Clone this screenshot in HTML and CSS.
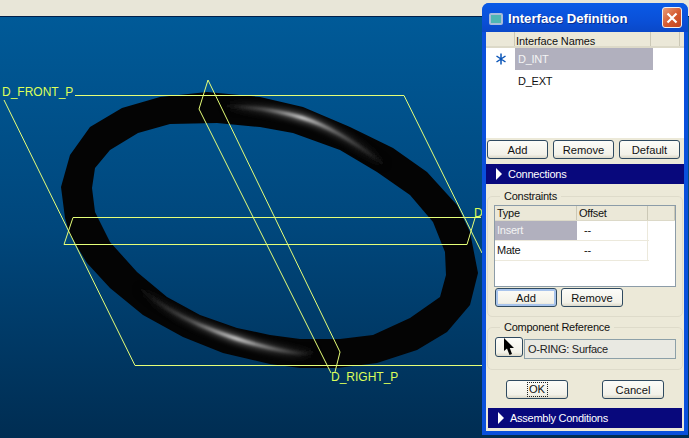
FILE: index.html
```html
<!DOCTYPE html>
<html lang="en">
<head>
<meta charset="utf-8">
<title>Interface Definition</title>
<link rel="stylesheet" href="styles.css">
</head>
<body>
<div class="app">
  <div class="topbar"></div>
  <div class="viewport">
    <svg class="scene" width="689" height="421" viewBox="0 17 689 421">
      <defs>
        <linearGradient id="bg" x1="0" y1="0" x2="0" y2="1">
          <stop offset="0" stop-color="#005a98"/>
          <stop offset="0.5" stop-color="#00477c"/>
          <stop offset="1" stop-color="#002d52"/>
        </linearGradient>
        <linearGradient id="glowTop" gradientUnits="userSpaceOnUse" x1="225" y1="0" x2="385" y2="0">
          <stop offset="0" stop-color="#050505"/>
          <stop offset="0.25" stop-color="#606060"/>
          <stop offset="0.48" stop-color="#f0f0f0"/>
          <stop offset="0.7" stop-color="#707070"/>
          <stop offset="1" stop-color="#050505"/>
        </linearGradient>
        <linearGradient id="glowBottom" gradientUnits="userSpaceOnUse" x1="140" y1="0" x2="315" y2="0">
          <stop offset="0" stop-color="#050505"/>
          <stop offset="0.3" stop-color="#606060"/>
          <stop offset="0.55" stop-color="#e8e8e8"/>
          <stop offset="0.78" stop-color="#707070"/>
          <stop offset="1" stop-color="#050505"/>
        </linearGradient>
        <filter id="soft" x="-30%" y="-100%" width="160%" height="300%"><feGaussianBlur stdDeviation="1.5"/></filter>
        <filter id="wide" x="-30%" y="-100%" width="160%" height="300%"><feGaussianBlur stdDeviation="3.5"/></filter>
      </defs>
      <rect x="0" y="17" width="689" height="421" fill="url(#bg)"/>
      <path class="ring" fill-rule="evenodd" d="M61 187 L70 155 L90 127 L122 108 L160 97 L207 92 L260 97 L303 107 L350 127 L393 148 L427 172 L457 205 L470 232 L478 273 L470 305 L447 332 L417 350 L377 363 L337 368 L300 368 L270 364 L223 353 L183 337 L143 315 L110 288 L87 263 L70 235 L65 218 Z M92 188 L95 168 L110 150 L138 133 L170 124 L217 123 L260 127 L293 133 L340 150 L377 172 L410 195 L433 222 L445 252 L446 275 L440 297 L410 318 L373 335 L340 339 L300 339 L270 335 L237 328 L200 315 L167 297 L137 272 L110 242 L95 212 Z"/>
      <path class="glow glow-top halo" filter="url(#wide)" d="M228 106 Q270 108 303 118 T382 163"/>
      <path class="glow glow-bottom halo" filter="url(#wide)" d="M142 290 Q165 310 200 325 T270 348 T312 352"/>
      <path class="glow glow-top" filter="url(#soft)" d="M228 106 Q270 108 303 118 T382 163"/>
      <path class="glow glow-bottom" filter="url(#soft)" d="M142 290 Q165 310 200 325 T270 348 T312 352"/>
      <g class="planes">
        <polyline points="75,95.5 404,95.5 482,253"/>
        <polyline points="4,100 135,365.5 482,365.5"/>
        <polyline points="331,373 199,109 208,80 340,352 335,372"/>
        <polyline points="481,217.5 73,217.5 64,244.5 467,244.5 475,218"/>
      </g>
      <text class="label" x="2" y="96">D_FRONT_P</text>
      <text class="label" x="331" y="381">D_RIGHT_P</text>
      <text class="label" x="474" y="217">D</text>
    </svg>
  </div>

  <section class="dialog">
    <header class="titlebar">
      <span class="appicon"></span>
      <h1 class="title">Interface Definition</h1>
      <button class="close" type="button" aria-label="Close">
        <svg width="12" height="12" viewBox="0 0 12 12"><path d="M1.5 1.5 L10.5 10.5 M10.5 1.5 L1.5 10.5"/></svg>
      </button>
    </header>
    <div class="body">
      <div class="listhead">
        <span class="lh-gutter"></span>
        <span class="lh-name">Interface Names</span>
        <span class="lh-end"></span>
      </div>
      <div class="list">
        <div class="list-row">
          <span class="marker">
            <svg width="12" height="12" viewBox="0 0 12 12"><path d="M6 0.5 V11.5 M1.5 3 L10.5 9 M10.5 3 L1.5 9"/></svg>
          </span>
          <span class="item selected">D_INT</span>
        </div>
        <div class="list-row">
          <span class="marker"></span>
          <span class="item">D_EXT</span>
        </div>
      </div>
      <div class="btnrow">
        <button class="btn wide" type="button">Add</button>
        <button class="btn wide" type="button">Remove</button>
        <button class="btn wide" type="button">Default</button>
      </div>
      <div class="bar"><span class="tri"></span>Connections</div>

      <fieldset class="group constraints">
        <legend>Constraints</legend>
        <div class="table">
          <div class="thead">
            <span class="c1">Type</span><span class="c2">Offset</span><span class="c3"></span>
          </div>
          <div class="trow">
            <span class="c1 selected">Insert</span><span class="c2">--</span>
          </div>
          <div class="trow">
            <span class="c1">Mate</span><span class="c2">--</span>
          </div>
        </div>
        <div class="tblbtns">
          <button class="btn mid default" type="button">Add</button>
          <button class="btn mid" type="button">Remove</button>
        </div>
      </fieldset>

      <fieldset class="group reference">
        <legend>Component Reference</legend>
        <div class="refrow">
          <button class="btn pick" type="button" aria-label="Select">
            <svg width="12" height="18" viewBox="0 0 12 18"><path d="M1 0 L1 13 L4 10.5 L6.5 17 L9 16 L6.8 10 L11 10 Z"/></svg>
          </button>
          <div class="field">O-RING: Surface</div>
        </div>
      </fieldset>

      <div class="okrow">
        <button class="btn mid ok" type="button"><span class="focus">OK</span></button>
        <button class="btn mid" type="button">Cancel</button>
      </div>
      <div class="bar bar-bottom"><span class="tri"></span>Assembly Conditions</div>
    </div>
  </section>
</div>
</body>
</html>
```
FILE: styles.css
```css
* { box-sizing: border-box; }
html, body { margin: 0; padding: 0; }
body { width: 689px; height: 438px; overflow: hidden; font-family: "Liberation Sans", Arial, sans-serif; font-size: 11px; letter-spacing: -0.25px; color: #111; }
.app { position: relative; width: 689px; height: 438px; display: flex; flex-direction: column; background: #ece9d8; }
.topbar { height: 16px; background: #e8e6d8; flex: none; }
.viewport { flex: 1; border-top: 1px solid #00204a; }
.scene { display: block; }
.ring { fill: #040404; }
.glow { fill: none; stroke-width: 2.5; stroke-linecap: round; }
.glow.halo { stroke-width: 6; opacity: 0.6; }
.glow-top { stroke: url(#glowTop); }
.glow-bottom { stroke: url(#glowBottom); }
.planes polyline { fill: none; stroke: #e6ff78; stroke-width: 1; }
.label { fill: #dcff5a; font-family: "Liberation Sans", Arial, sans-serif; font-size: 12px; letter-spacing: 0; }

.dialog { position: absolute; left: 482px; top: 3px; width: 206px; height: 432px; display: flex; flex-direction: column; background: #0a50dc; border-radius: 7px 7px 0 0; padding: 0 4px 4px; }
.titlebar { height: 29px; flex: none; display: flex; align-items: center; background: linear-gradient(#0a5ae6, #0a50d8 60%, #0a48c8); margin: 0 -4px; padding: 0 6px 0 7px; border-radius: 7px 7px 0 0; }
.appicon { width: 14px; height: 12px; background: #4fb6b4; border: 2px solid #a8bcd8; border-radius: 2px; margin-top: 2px; }
.title { flex: 1; margin: 2px 0 0 5px; color: #fff; font-size: 13.2px; letter-spacing: 0; font-weight: bold; font-family: "Liberation Sans", Arial, sans-serif; text-shadow: 1px 1px 0 #0a2f90; }
.close { width: 20px; height: 21px; padding: 0; display: flex; align-items: center; justify-content: center; background: linear-gradient(135deg, #ea9c78, #d4582e 55%, #c4441e); border: 1px solid #f0f0f0; border-radius: 3px; }
.close path { stroke: #fff; stroke-width: 2.2; fill: none; }

.body { flex: 1; display: flex; flex-direction: column; background: #ece9d8; }
.listhead { height: 16px; flex: none; display: flex; background: #ebe8d8; border-bottom: 2px solid #dcd9c8; line-height: 18px; }
.lh-gutter { width: 29px; flex: none; border-right: 1px solid #cbc8b6; }
.lh-name { width: 136px; flex: none; padding-left: 1px; border-right: 1px solid #cbc8b6; letter-spacing: -0.1px; }
.lh-end { width: 29px; flex: none; border-right: 1px solid #cbc8b6; }
.list { height: 90px; flex: none; background: #fff; display: flex; flex-direction: column; }
.list-row { display: flex; height: 22px; align-items: stretch; }
.marker { width: 29px; flex: none; display: flex; align-items: center; justify-content: center; padding-left: 1px; }
.marker path { stroke: #0a55b8; stroke-width: 1.5; fill: none; }
.item { width: 138px; padding-left: 3px; line-height: 22px; }
.item.selected, .c1.selected { background: #b1b0be; color: #f4f4f4; }
.btnrow { display: flex; gap: 5px; padding: 2px 0 0 1px; flex: none; }
.btn { height: 19px; padding: 0; font-family: "Liberation Sans", Arial, sans-serif; font-size: 11.2px; letter-spacing: 0; color: #111; background: linear-gradient(#fcfcf8, #f2f1e8 80%, #dcd8c8); border: 1px solid #2f4a60; border-radius: 3px; }
.btn.wide { width: 61px; }
.btn.mid { width: 62px; }
.btn.default { box-shadow: inset 0 0 0 2px #a8c4ec; }
.bar { height: 20px; flex: none; margin-top: 5px; display: flex; align-items: center; background: #08087c; color: #fff; padding-left: 10px; }
.tri { width: 0; height: 0; border-left: 6px solid #fff; border-top: 6px solid transparent; border-bottom: 6px solid transparent; margin-right: 6px; }
.group { margin: 0 1px; padding: 0; border: 1px solid #dedbca; border-radius: 5px; min-width: 0; }
.group legend { margin-left: 6px; padding: 0 4px; line-height: 13px; }
.constraints { margin-top: 6px; height: 127px; padding: 2px 6px 0; }
.reference { margin-top: 4px; height: 49px; padding: 3px 6px 0; }
.table { height: 82px; border: 1px solid #8c9ca8; background: #fff; }
.thead { display: flex; height: 15px; background: #ebe8d8; border-bottom: 1px solid #dcd9c8; line-height: 15px; }
.thead span { padding-left: 2px; }
.c1 { width: 82px; flex: none; }
.c2 { width: 71px; flex: none; }
.c3 { width: 27px; flex: none; }
.thead .c1, .thead .c2, .thead .c3 { border-right: 1px solid #cbc8b6; }
.trow { display: flex; height: 20px; line-height: 19px; width: 154px; border-bottom: 1px solid #ece9dc; }
.trow .c1 { padding-left: 2px; }
.trow .c2 { padding-left: 7px; border-right: 1px solid #ece9dc; }
.tblbtns { display: flex; gap: 4px; margin: 1px 0 0 1px; }
.refrow { display: flex; gap: 1px; margin-left: 1px; }
.pick { width: 28px; height: 20px; display: flex; align-items: center; justify-content: center; flex: none; }
.pick path { fill: #000; }
.field { width: 152px; height: 20px; margin-top: 2px; background: #e9e9e2; border: 1px solid #8ca0a8; padding-left: 3px; line-height: 18px; color: #222; }
.okrow { display: flex; gap: 34px; padding: 10px 0 0 20px; flex: none; }
.bar-bottom { margin: 9px 2px 0; }
.focus { display: inline-block; width: 19px; height: 13px; line-height: 12px; outline: 1px dotted #222; }
```
